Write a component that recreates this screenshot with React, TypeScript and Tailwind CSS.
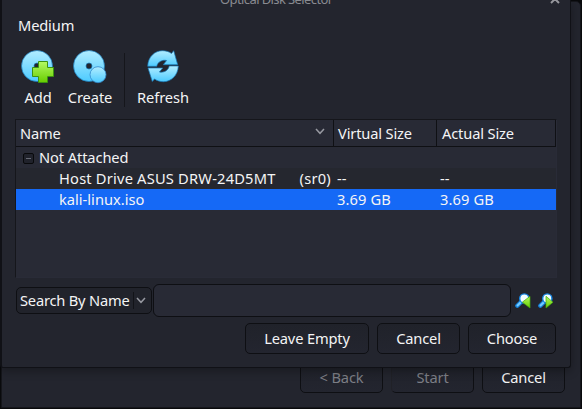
import React from "react";

function Defs() {
  return (
    <svg width="0" height="0" className="absolute">
      <defs>
        <linearGradient id="disk" x1="0" y1="0" x2="0" y2="1">
          <stop offset="0" stopColor="#b2edff" />
          <stop offset="1" stopColor="#4dcbff" />
        </linearGradient>
        <linearGradient id="green" x1="0" y1="0" x2="0" y2="1">
          <stop offset="0" stopColor="#b4fa62" />
          <stop offset="1" stopColor="#67cc00" />
        </linearGradient>
      </defs>
    </svg>
  );
}

const DISK =
  "M16 .5a15.5 15.5 0 1 0 0 31a15.5 15.5 0 1 0 0-31zM16 13a3 3 0 1 1 0 6a3 3 0 1 1 0-6z";

function AddIcon() {
  return (
    <svg width="34" height="34" viewBox="0 0 34 34">
      <path d={DISK} fill="url(#disk)" fillRule="evenodd" stroke="#1978b8" strokeWidth=".7" />
      <path d="M17.5 11.5h9v6h6v9h-6v6h-9v-6h-6v-9h6z" fill="url(#green)" stroke="#3b9410" />
    </svg>
  );
}

function CreateIcon() {
  return (
    <svg width="34" height="34" viewBox="0 0 34 34">
      <path d={DISK} fill="url(#disk)" fillRule="evenodd" stroke="#1978b8" strokeWidth=".7" />
      <circle cx="25" cy="24.7" r="8" fill="url(#disk)" stroke="#3488cc" strokeWidth=".8" />
    </svg>
  );
}

function RefreshIcon() {
  return (
    <svg width="32" height="34" viewBox="0 0 32 34">
      <g fill="url(#disk)" stroke="#1978b8" strokeWidth=".7">
        <path d="M.7 16.3C1 6.500 8 .7 15.500.7c3.500 0 6.600 1 9 2.800L26.700.7l4 14H16.300l3.300-4.200c-4.600-1.100-9.200 1.800-9.800 5.800z" />
        <path d="M31.300 16C31 25.500 24 31.700 16.500 31.700c-3.500 0-6.600-1-9-2.800L5.300 31.500l-4.300-13.500H15.700l-3.300 4c4.600 1.100 9.200-2 9.800-6z" />
      </g>
    </svg>
  );
}

function SearchIcon({ next = false }: { next?: boolean }) {
  return (
    <svg width="16" height="16" viewBox="0 0 16 16">
      <path d="M2.300 12.700L5.800 9.200" stroke="#1683dc" strokeWidth="4.200" strokeLinecap="round" />
      <path d="M2.500 12.500L5.500 9.500" stroke="#75ccff" strokeWidth="1.900" strokeLinecap="round" />
      <circle cx="9.300" cy="5.500" r="4.600" fill="#f4fdff" stroke="#1687e4" strokeWidth="1.400" />
      <path
        d={next ? "M8 3.300L15 9.200L8 15z" : "M15 3.300V15L7.300 9.200z"}
        fill="url(#green)"
        stroke="#43a90b"
        strokeWidth=".7"
      />
    </svg>
  );
}

function Chevron() {
  return (
    <svg width="10" height="7" viewBox="0 0 10 7" fill="none">
      <path d="M1 1l4 4.300L9 1" stroke="#9799a1" strokeWidth="1.500" />
    </svg>
  );
}

function Tool({ label, icon, className }: { label: string; icon: React.ReactNode; className: string }) {
  return (
    <div className={`flex flex-col items-center ${className}`}>
      {icon}
      <span className="mt-[3px] leading-5 tracking-[-0.1px]">{label}</span>
    </div>
  );
}

function Button({ label, className = "" }: { label: string; className?: string }) {
  return (
    <button
      className={`flex h-[31px] shrink-0 items-center justify-center rounded-[5px] border border-[#0e0f13] bg-linear-to-b from-[#20222a] to-[#23252f] pb-[2px] leading-5 tracking-[-0.15px] ${className}`}
    >
      {label}
    </button>
  );
}

function Row({ name, size, className = "" }: { name: string; size: string; className?: string }) {
  return (
    <div className={`flex h-[21px] leading-[21px] whitespace-pre ${className}`}>
      <span className="w-[321px] pl-[43px]">{name}</span>
      <span className="w-[103px] tracking-[0.1px]">{size}</span>
      <span className="tracking-[0.1px]">{size}</span>
    </div>
  );
}

function MediumTable() {
  return (
    <div className="ml-[13px] h-[159px] w-[542px] border border-[#292b37] border-t-[#15161b] border-l-[#15161b] bg-[#282a35]">
      <div className="flex h-[27px] border-b border-[#0f1014] leading-[26px] tracking-[-0.15px]">
        <div className="flex w-[318px] items-center justify-between border-r border-[#0f1014] pr-[8px] pl-[4px]">
          <span>Name</span>
          <span className="-mt-[3px] flex"><Chevron /></span>
        </div>
        <div className="w-[103px] border-r border-[#0f1014] pl-[4px]">Virtual Size</div>
        <div className="w-[119px] border-r border-[#0f1014] pl-[5px]">Actual Size</div>
      </div>
      <div className="flex h-[21px] items-center pl-[7px]">
        <span className="mt-[2px] flex size-[11px] items-center justify-center rounded-[2px] border border-[#08090b] bg-[#20222b]">
          <span className="h-px w-[5px] bg-[#686b76]" />
        </span>
        <span className="ml-[5px] leading-[21px] tracking-[-0.1px]">Not Attached</span>
      </div>
      <Row name="Host Drive ASUS DRW-24D5MT      (sr0)" size="--" className="bg-[#25272f] tracking-[0.2px]" />
      <Row name="kali-linux.iso" size="3.69 GB" className="bg-[#1569f6]" />
    </div>
  );
}

function Selector() {
  return (
    <div className="absolute top-0 left-0 h-[368px] w-[571px] overflow-hidden rounded-b-[3px] border-x border-b border-[#101116] border-l-2 bg-[#23252e] shadow-[0_3px_10px_#0000004d]">
      <div className="relative h-[15px]">
        <span className="absolute -top-[11px] left-[218px] text-[13px] leading-5 tracking-[-0.6px] whitespace-nowrap text-[#898b91]">Optical Disk Selector</span>
        <svg className="absolute top-[-5px] left-[548px]" width="10" height="9" viewBox="0 0 10 9">
          <path d="M1 0l8 8M9 0L1 8" stroke="#96979c" strokeWidth="2" />
        </svg>
      </div>
      <div className="ml-[16px] h-[35px] leading-5 tracking-[-0.15px]">Medium</div>
      <div className="flex h-[69px] pl-[12px]">
        <Tool label="Add" icon={<AddIcon />} className="w-[48px]" />
        <Tool label="Create" icon={<CreateIcon />} className="w-[56px]" />
        <div className="mt-[3px] ml-[6px] h-[54px] w-px bg-[#15161b]" />
        <Tool label="Refresh" icon={<RefreshIcon />} className="ml-[6px] w-[64px]" />
      </div>
      <MediumTable />
      <div className="mt-[6px] flex h-[33px] items-center pl-[14px]">
        <div className="flex h-[27px] w-[136px] items-center rounded-[5px] border border-[#0e0f13] bg-[#21232b] pl-[3px] leading-5">
          <span className="w-[113px] pb-[2px] tracking-[-0.2px]">Search By Name</span>
          <span className="mr-[2px] h-[17px] w-px bg-[#121318]" />
          <Chevron />
        </div>
        <div className="ml-px h-[33px] w-[358px] rounded-[6px] border border-[#0e0f13] bg-[#282a35]" />
        <div className="ml-[4px] flex gap-[7px]">
          <SearchIcon />
          <SearchIcon next />
        </div>
      </div>
      <div className="mt-[6px] flex gap-[8px] pl-[243px]">
        <Button label="Leave Empty" className="w-[124px]" />
        <Button label="Cancel" className="w-[83px]" />
        <Button label="Choose" className="w-[88px]" />
      </div>
    </div>
  );
}

export default function App() {
  return (
    <div className="relative h-[409px] w-[582px] overflow-hidden bg-[#090a0c] font-['Noto_Sans',sans-serif] text-[14.67px] text-[#f4f4f5]">
      <Defs />
      <div className="absolute top-px left-px flex h-[407px] w-[580px] items-end rounded-tr-[5px] border border-[#15161b] bg-[#23252e] pb-[14px] pl-[298px]">
        <Button label="< Back" className="w-[83px] text-[#7c7e85]" />
        <Button label="Start" className="ml-[8px] w-[83px] border-l-[#202127] text-[#7c7e85]" />
        <Button label="Cancel" className="ml-[8px] w-[83px]" />
      </div>
      <Selector />
    </div>
  );
}
